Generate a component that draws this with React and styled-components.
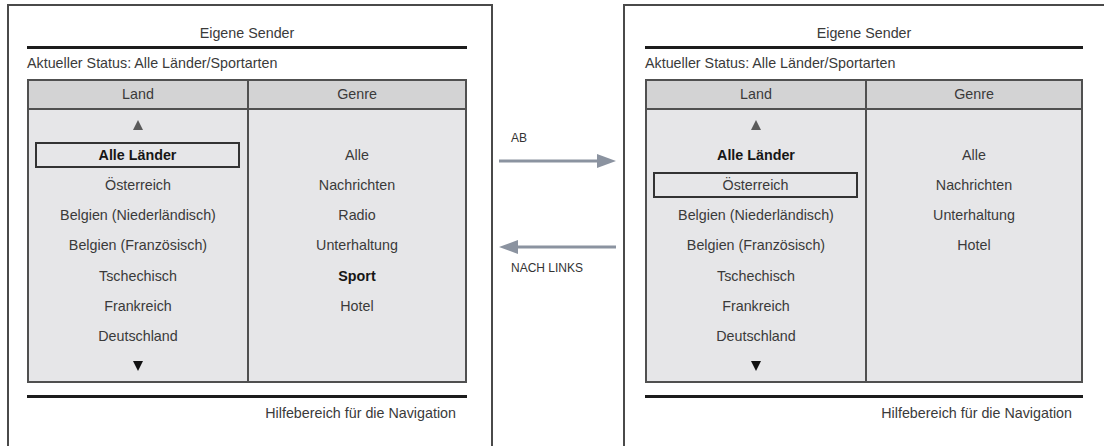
import React from 'react'
import styled, { createGlobalStyle } from 'styled-components'

const GlobalStyle = createGlobalStyle`
  html, body {
    margin: 0;
    padding: 0;
    background: #fff;
  }
  body {
    font-family: "Liberation Sans", Arial, sans-serif;
    color: #3a3a3a;
  }
`

const Page = styled.div`
  display: flex;
  width: 1104px;
  height: 446px;
  padding: 4px 0 0 7px;
  box-sizing: border-box;
  overflow: hidden;
`

const Screen = styled.section`
  flex: none;
  width: 486px;
  box-sizing: border-box;
  border: 2px solid #4a4a4a;
  border-bottom: none;
  padding: 17px 24px 0 ${p => p.$padLeft}px;
  display: flex;
  flex-direction: column;
  font-size: 14.3px;
`

const Title = styled.div`
  text-align: center;
  line-height: 20px;
`

const Rule = styled.div`
  height: 3px;
  background: #1c1c1c;
  margin-top: ${p => p.$gap}px;
`

const Status = styled.div`
  line-height: 20px;
  margin-top: 4px;
`

const Table = styled.div`
  margin-top: 6px;
  border: 2px solid #505050;
`

const Columns = styled.div`
  display: grid;
  grid-template-columns: 218px 1fr;
`

const HeadCell = styled.div`
  height: 27px;
  line-height: 27px;
  text-align: center;
  background: #d3d3d4;
  border-bottom: 2px solid #505050;
  & + & {
    border-left: 2px solid #505050;
  }
`

const List = styled.div`
  height: 271px;
  display: grid;
  grid-template-rows: repeat(9, 1fr);
  background: #e6e6e8;
  & + & {
    border-left: 2px solid #505050;
  }
`

const Item = styled.div`
  display: flex;
  align-items: center;
  justify-content: center;
  font-weight: ${p => (p.$bold ? 700 : 400)};
  color: ${p => (p.$bold ? '#161616' : '#3a3a3a')};
  ${p =>
    p.$selected &&
    `
    align-self: center;
    height: 26px;
    box-sizing: border-box;
    margin: 0 7px 0 6px;
    border: 2px solid #333;
  `}
`

const Triangle = styled.span`
  width: 0;
  height: 0;
  border-left: 5.5px solid transparent;
  border-right: 5.5px solid transparent;
  ${p =>
    p.$down
      ? 'border-top: 10px solid #111;'
      : 'border-bottom: 10px solid #5a5a5a;'}
`

const Help = styled.div`
  text-align: right;
  line-height: 20px;
  margin-top: 5px;
  padding-right: 11px;
`

const Middle = styled.div`
  flex: none;
  width: 130px;
  padding: 127px 0 0 6px;
  box-sizing: border-box;
  display: flex;
  flex-direction: column;
  font-size: 12px;
  color: #333;
`

const Label = styled.div`
  line-height: 14px;
  padding-left: 12px;
  margin-top: ${p => p.$gap || 0}px;
`

const ArrowSvg = styled.svg`
  display: block;
  margin-top: ${p => p.$gap}px;
`

const Arrow = ({ left, gap }) => (
  <ArrowSvg width="117" height="14" viewBox="0 0 117 14" $gap={gap}>
    {left ? (
      <>
        <line x1="17" y1="7" x2="117" y2="7" stroke="#8b93a0" strokeWidth="3" />
        <polygon points="0,7 19,0 19,14" fill="#8b93a0" />
      </>
    ) : (
      <>
        <line x1="0" y1="7" x2="100" y2="7" stroke="#8b93a0" strokeWidth="3" />
        <polygon points="98,0 117,7 98,14" fill="#8b93a0" />
      </>
    )}
  </ArrowSvg>
)

const lands = [
  'Alle Länder',
  'Österreich',
  'Belgien (Niederländisch)',
  'Belgien (Französisch)',
  'Tschechisch',
  'Frankreich',
  'Deutschland',
]

const Panel = ({ padLeft, selected, genres, boldGenre }) => (
  <Screen $padLeft={padLeft}>
    <Title>Eigene Sender</Title>
    <Rule $gap={3} />
    <Status>Aktueller Status: Alle Länder/Sportarten</Status>
    <Table>
      <Columns>
        <HeadCell>Land</HeadCell>
        <HeadCell>Genre</HeadCell>
      </Columns>
      <Columns>
        <List>
          <Item><Triangle /></Item>
          {lands.map((l, i) => (
            <Item key={l} $bold={i === 0} $selected={i === selected}>
              {l}
            </Item>
          ))}
          <Item><Triangle $down /></Item>
        </List>
        <List>
          <Item />
          {genres.map(g => (
            <Item key={g} $bold={g === boldGenre}>
              {g}
            </Item>
          ))}
        </List>
      </Columns>
    </Table>
    <Rule $gap={12} />
    <Help>Hilfebereich für die Navigation</Help>
  </Screen>
)

export default function App() {
  return (
    <>
      <GlobalStyle />
      <Page>
        <Panel
          padLeft={18}
          selected={0}
          genres={['Alle', 'Nachrichten', 'Radio', 'Unterhaltung', 'Sport', 'Hotel']}
          boldGenre="Sport"
        />
        <Middle>
          <Label>AB</Label>
          <Arrow gap={9} />
          <Arrow left gap={72} />
          <Label $gap={7}>NACH LINKS</Label>
        </Middle>
        <Panel
          padLeft={20}
          selected={1}
          genres={['Alle', 'Nachrichten', 'Unterhaltung', 'Hotel']}
        />
      </Page>
    </>
  )
}
